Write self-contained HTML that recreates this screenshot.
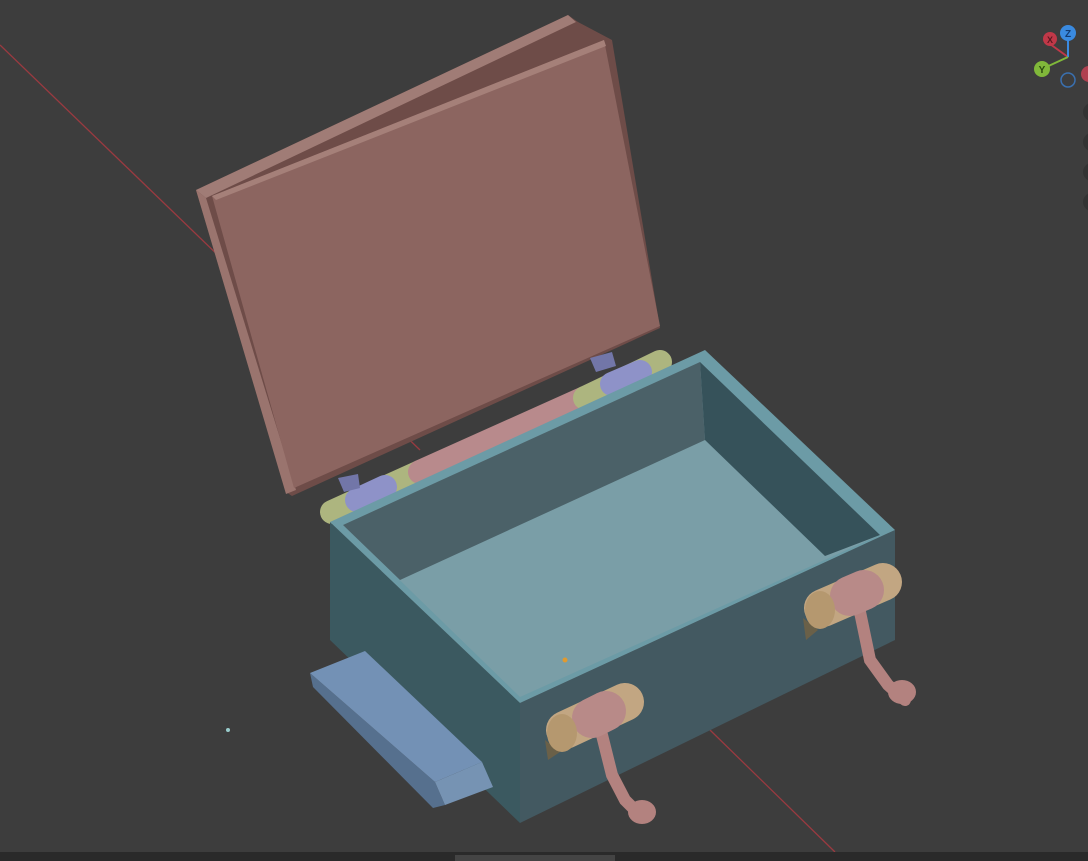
<!DOCTYPE html>
<html><head><style>html,body{margin:0;padding:0;background:#3d3d3d;overflow:hidden}svg{display:block}</style></head><body>
<svg width="1088" height="861" viewBox="0 0 1088 861" xmlns="http://www.w3.org/2000/svg" font-family="Liberation Sans, sans-serif">
<rect width="1088" height="861" fill="#3d3d3d"/>
<line x1="0" y1="45" x2="420" y2="450" stroke="#9a3a40" stroke-width="1.3"/>
<line x1="710" y1="730" x2="835" y2="852" stroke="#9a3a40" stroke-width="1.3"/>
<!-- lid -->
<polygon points="196,190 568,15 578,22 612,40 660,328 292,496 286,492" fill="#6e4c48"/>
<polygon points="196,190 568,15 576,22 206,198" fill="#a07c76"/>
<polygon points="196,190 206,198 296,490 286,494" fill="#9a746e"/>
<polygon points="212,196 604,40 660,326 294,488" fill="#8c6560"/>
<polygon points="212,196 604,40 606,46 216,200" fill="#a58079"/>
<!-- hinge -->
<g stroke-linecap="round" stroke-width="24" fill="none">
<line x1="332" y1="512" x2="420" y2="472" stroke="#adb57f"/>
<line x1="357" y1="500" x2="385" y2="487" stroke="#8e92c8"/>
<line x1="420" y1="472" x2="585" y2="398" stroke="#b88a8c"/>
<line x1="585" y1="398" x2="660" y2="362" stroke="#adb57f"/>
<line x1="612" y1="384" x2="640" y2="372" stroke="#8e92c8"/>
</g>
<polygon points="338,478 358,474 360,488 344,492" fill="#7276a8"/>
<polygon points="590,358 612,352 616,366 596,372" fill="#7276a8"/>
<!-- box -->
<polygon points="330,522 520,703 520,823 330,640" fill="#3b5960"/>
<polygon points="520,703 895,530 895,640 520,823" fill="#435961"/>
<polygon points="330,522 705,350 895,530 520,703" fill="#6c9ba6"/>
<polygon points="343,525 700,362 880,535 520,697" fill="#7a9ea7"/>
<polygon points="343,525 700,362 705,440 400,580" fill="#4b6168"/>
<polygon points="700,362 880,535 825,556 705,440" fill="#36525a"/>
<circle cx="565" cy="660" r="2.5" fill="#e09a30"/>
<!-- slab -->
<polygon points="310,673 313,687 433,808 445,805 435,782" fill="#56708e"/>
<polygon points="310,673 365,651 482,762 435,782" fill="#7391b5"/>
<polygon points="435,782 482,762 493,787 445,805" fill="#7693b3"/>
<!-- handles -->
<polygon points="545,740 548,760 560,752" fill="#6a6048"/>
<polygon points="803,618 806,640 818,630" fill="#6a6048"/>
<g stroke-linecap="round" fill="none">
<path d="M602 735 L612 775 L625 800 L640 815" stroke="#b3827f" stroke-width="12"/>
<path d="M860 612 L870 660 L888 685 L905 700" stroke="#b3827f" stroke-width="12"/>
<line x1="565" y1="730" x2="625" y2="702" stroke="#c2a682" stroke-width="38"/>
<line x1="592" y1="718" x2="606" y2="711" stroke="#b88a88" stroke-width="40"/>
<line x1="823" y1="608" x2="883" y2="582" stroke="#c2a682" stroke-width="38"/>
<line x1="850" y1="596" x2="864" y2="590" stroke="#b88a88" stroke-width="40"/>
</g>
<ellipse cx="562" cy="733" rx="15" ry="19" fill="#b5986f"/>
<ellipse cx="820" cy="610" rx="15" ry="19" fill="#b5986f"/>
<ellipse cx="642" cy="812" rx="14" ry="12" fill="#b3827f"/>
<ellipse cx="902" cy="692" rx="14" ry="12" fill="#b3827f"/>
<circle cx="228" cy="730" r="2" fill="#9cc"/>
<!-- gizmo -->
<line x1="1068" y1="57" x2="1050" y2="44" stroke="#c03848" stroke-width="2"/>
<line x1="1068" y1="57" x2="1068" y2="36" stroke="#3a8ae0" stroke-width="2"/>
<line x1="1068" y1="57" x2="1042" y2="69" stroke="#80b83a" stroke-width="2"/>
<circle cx="1050" cy="39" r="7" fill="#c03848"/><text x="1050" y="43" font-size="9" text-anchor="middle" fill="#5a1820" font-weight="bold">X</text>
<circle cx="1068" cy="33" r="8" fill="#3a8ae0"/><text x="1068" y="37" font-size="10" text-anchor="middle" fill="#123a70" font-weight="bold">Z</text>
<circle cx="1042" cy="69" r="8" fill="#80b83a"/><text x="1042" y="73" font-size="10" text-anchor="middle" fill="#2a4a10" font-weight="bold">Y</text>
<circle cx="1068" cy="80" r="7" fill="none" stroke="#3a70b0" stroke-width="1.5"/>
<circle cx="1089" cy="74" r="8" fill="#b04050"/>
<circle cx="1092" cy="112" r="9" fill="#333"/><circle cx="1092" cy="142" r="9" fill="#333"/><circle cx="1092" cy="172" r="9" fill="#333"/><circle cx="1092" cy="202" r="9" fill="#333"/>
<rect x="0" y="852" width="1088" height="9" fill="#2a2a2a"/>
<rect x="455" y="855" width="160" height="6" fill="#444"/>
</svg>
</body></html>
